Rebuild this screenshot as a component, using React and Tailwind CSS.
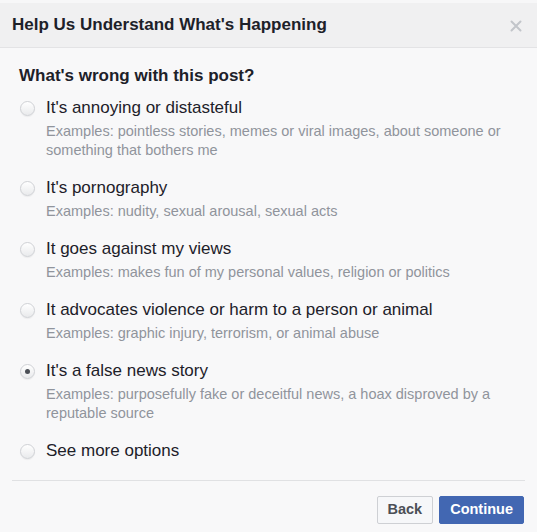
import React, { useState } from 'react';

const options = [
    { id: 'annoying', label: "It's annoying or distasteful", desc: 'Examples: pointless stories, memes or viral images, about someone or something that bothers me' },
    { id: 'porn', label: "It's pornography", desc: 'Examples: nudity, sexual arousal, sexual acts' },
    { id: 'views', label: 'It goes against my views', desc: 'Examples: makes fun of my personal values, religion or politics' },
    { id: 'violence', label: 'It advocates violence or harm to a person or animal', desc: 'Examples: graphic injury, terrorism, or animal abuse' },
    { id: 'false', label: "It's a false news story", desc: 'Examples: purposefully fake or deceitful news, a hoax disproved by a reputable source' },
    { id: 'more', label: 'See more options' },
];

function Radio({ checked }) {
    return (
        <span className="w-[15px] h-[15px] rounded-full border border-[#cfd1d5] bg-gradient-to-b from-white to-[#e9eaec] shadow-[0_1px_1px_rgba(0,0,0,0.05)] flex items-center justify-center flex-shrink-0">
            {checked && <span className="w-[5px] h-[5px] rounded-full bg-[#4b4f56]" />}
        </span>
    );
}

export default function App() {
    const [selected, setSelected] = useState('false');

    return (
        <div className="w-[537px] h-[532px] bg-[#f8f8f9] text-[#1d2129] overflow-hidden" style={{ fontFamily: '"Liberation Sans", Arial, sans-serif' }}>
            {/* Header */}
            <div className="h-[48px] bg-[#f0f0f1] border-t-[3px] border-t-[#f7f7f8] border-b border-b-[#e3e3e5] flex items-center justify-between pl-[12px] pr-[15px]">
                <h2 className="text-[17px] font-bold leading-5">Help Us Understand What's Happening</h2>
                <svg width="12" height="12" viewBox="0 0 12 12" className="mt-[1px]">
                    <path d="M1.5 1.5l9 9M10.5 1.5l-9 9" stroke="#c2c5ca" strokeWidth="2" strokeLinecap="round" />
                </svg>
            </div>

            {/* Body */}
            <div className="pt-[18px] pl-[19px] pr-[12px]">
                <h3 className="text-[17px] font-bold leading-5">What's wrong with this post?</h3>

                <div className="mt-[12px] flex flex-col gap-[18px]">
                    {options.map(o => (
                        <label key={o.id} className="flex items-start cursor-pointer ml-[1px]" onClick={() => setSelected(o.id)}>
                            <span className="h-5 flex items-center">
                                <Radio checked={selected === o.id} />
                            </span>
                            <div className="ml-[11px]">
                                <p className="text-[17px] leading-5">{o.label}</p>
                                {o.desc && <p className="mt-[4px] text-[14.5px] leading-[19px] text-[#90949c]">{o.desc}</p>}
                            </div>
                        </label>
                    ))}
                </div>
            </div>

            {/* Footer */}
            <div className="mt-[19px] ml-[12px] mr-[12px] border-t border-[#e0e1e3]" />
            <div className="mt-[15px] pr-[13px] flex justify-end gap-[6px]">
                <button className="h-[28px] px-[10px] rounded-[2px] border border-[#ced0d4] bg-[#f6f7f9] text-[#4b4f56] text-[14.5px] font-bold">Back</button>
                <button className="h-[28px] px-[10px] rounded-[2px] border border-[#4267b2] bg-[#4267b2] text-white text-[14.5px] font-bold">Continue</button>
            </div>
        </div>
    );
}
